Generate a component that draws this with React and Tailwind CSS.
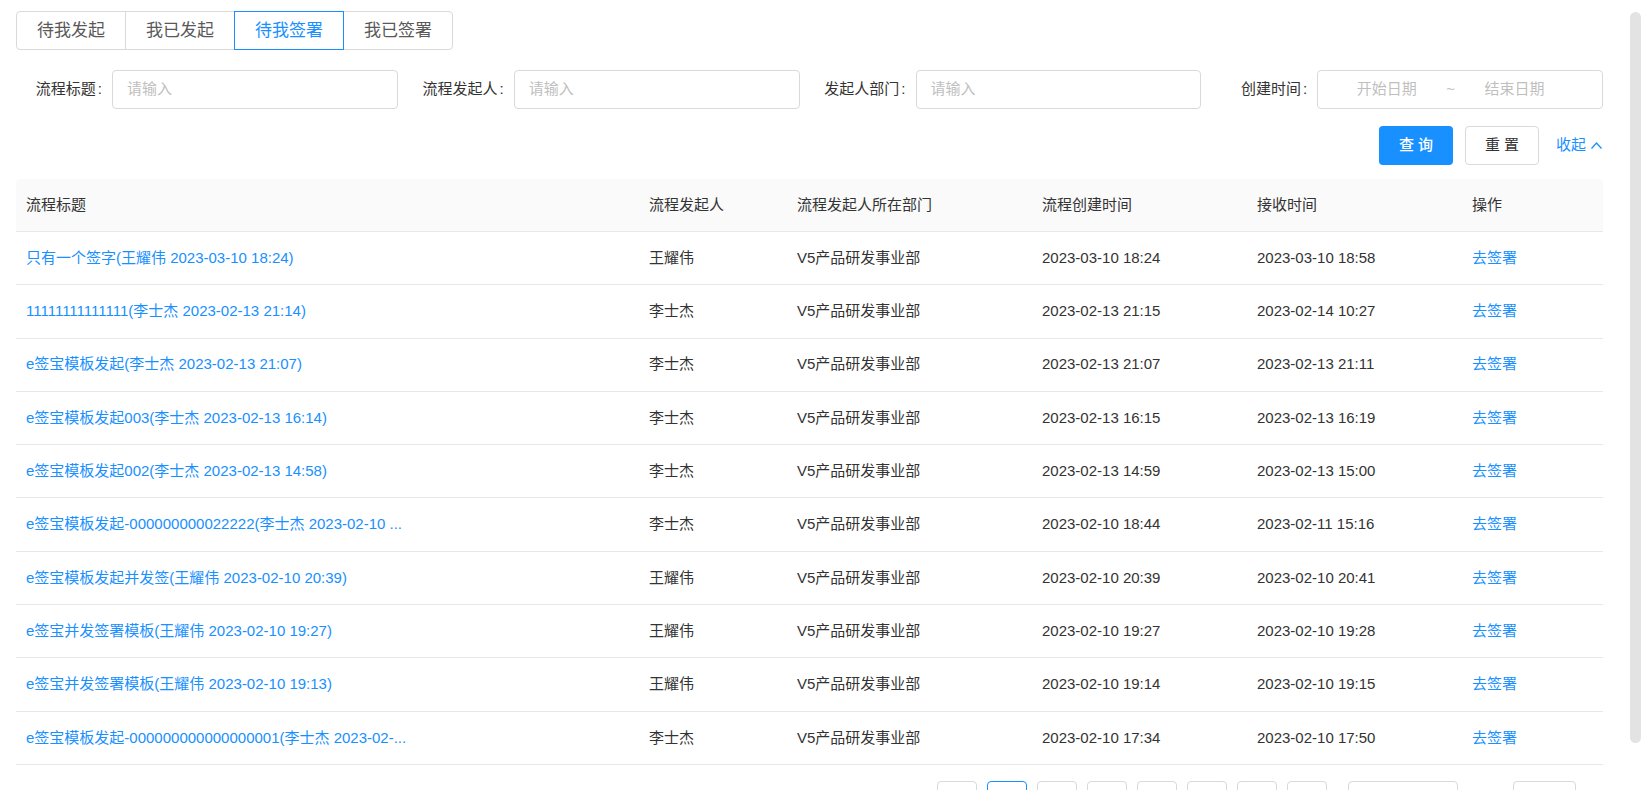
import React from 'react';

// --- DATA ---
const TABS = ['待我发起', '我已发起', '待我签署', '我已签署'];

const ROWS = [
  { title: '只有一个签字(王耀伟 2023-03-10 18:24)', user: '王耀伟', created: '2023-03-10 18:24', received: '2023-03-10 18:58' },
  { title: '11111111111111(李士杰 2023-02-13 21:14)', user: '李士杰', created: '2023-02-13 21:15', received: '2023-02-14 10:27' },
  { title: 'e签宝模板发起(李士杰 2023-02-13 21:07)', user: '李士杰', created: '2023-02-13 21:07', received: '2023-02-13 21:11' },
  { title: 'e签宝模板发起003(李士杰 2023-02-13 16:14)', user: '李士杰', created: '2023-02-13 16:15', received: '2023-02-13 16:19' },
  { title: 'e签宝模板发起002(李士杰 2023-02-13 14:58)', user: '李士杰', created: '2023-02-13 14:59', received: '2023-02-13 15:00' },
  { title: 'e签宝模板发起-000000000022222(李士杰 2023-02-10 ...', user: '李士杰', created: '2023-02-10 18:44', received: '2023-02-11 15:16' },
  { title: 'e签宝模板发起并发签(王耀伟 2023-02-10 20:39)', user: '王耀伟', created: '2023-02-10 20:39', received: '2023-02-10 20:41' },
  { title: 'e签宝并发签署模板(王耀伟 2023-02-10 19:27)', user: '王耀伟', created: '2023-02-10 19:27', received: '2023-02-10 19:28' },
  { title: 'e签宝并发签署模板(王耀伟 2023-02-10 19:13)', user: '王耀伟', created: '2023-02-10 19:14', received: '2023-02-10 19:15' },
  { title: 'e签宝模板发起-000000000000000001(李士杰 2023-02-...', user: '李士杰', created: '2023-02-10 17:34', received: '2023-02-10 17:50' },
];

const COLS = 'grid grid-cols-[623px_148px_245px_215px_215px_141px]';

// --- PARTS ---
const Field = ({ label, children }) => (
  <div className="flex items-center">
    <div className="w-[96px] shrink-0 text-right pr-[10px] text-[15px] text-[#333]">
      {label}<span className="ml-[2px]">:</span>
    </div>
    {children}
  </div>
);

const TextInput = () => (
  <div className="flex-1 h-[39px] border border-[#d9d9d9] rounded-[4px] flex items-center pl-[14px] text-[15px] text-[#bfbfbf]">
    请输入
  </div>
);

const RangeInput = () => (
  <div className="flex-1 h-[39px] border border-[#d9d9d9] rounded-[4px] flex items-center pl-[11px] pr-[30px] text-[15px] text-[#bfbfbf]">
    <span className="flex-1 text-center">开始日期</span>
    <span className="px-[2px] text-[#bfbfbf]">~</span>
    <span className="flex-1 text-center">结束日期</span>
  </div>
);

const PageBox = ({ children, active }) => (
  <div className={`w-[40px] h-[40px] rounded-[4px] border flex items-center justify-center text-[15px] ${active ? 'border-[#1890ff] text-[#1890ff]' : 'border-[#d9d9d9] text-[#333]'}`}>
    {children}
  </div>
);

export default function App() {
  const [activeTab, setActiveTab] = React.useState(2);

  return (
    <div className="h-screen flex overflow-hidden bg-white [font-family:'Liberation_Sans','Noto_Sans_CJK_SC',sans-serif]">
      <div className="flex-1 min-w-0 overflow-hidden pl-[16px] pr-[27px] pt-[11px] pb-[9px]">
        {/* tabs */}
        <div className="flex">
          {TABS.map((t, i) => (
            <button
              key={t}
              onClick={() => setActiveTab(i)}
              className={`w-[110px] h-[39px] flex items-center justify-center text-[17px] border -ml-px first:ml-0 first:rounded-l-[4px] last:rounded-r-[4px] ${activeTab === i ? 'relative z-10 border-[#1890ff] text-[#1890ff]' : 'border-[#d9d9d9] text-[#595959]'}`}
            >
              {t}
            </button>
          ))}
        </div>

        {/* filters */}
        <div className="grid grid-cols-4 gap-x-[20px] mt-[20px]">
          <Field label="流程标题"><TextInput /></Field>
          <Field label="流程发起人"><TextInput /></Field>
          <Field label="发起人部门"><TextInput /></Field>
          <Field label="创建时间"><RangeInput /></Field>
        </div>

        <div className="flex items-center justify-end mt-[17px]">
          <button className="w-[74px] h-[39px] rounded-[4px] bg-[#1890ff] text-white text-[15px] font-medium">查 询</button>
          <button className="w-[74px] h-[39px] rounded-[4px] border border-[#d9d9d9] bg-white text-[#333] text-[15px] ml-[12px]">重 置</button>
          <button className="ml-[17px] flex items-center text-[15px] text-[#1890ff]">
            收起
            <svg width="13" height="9" viewBox="0 0 13 9" className="ml-[4px]">
              <polyline points="1.5,7.5 6.5,2 11.5,7.5" fill="none" stroke="#1890ff" strokeWidth="1.3" />
            </svg>
          </button>
        </div>

        {/* table */}
        <div className="mt-[14px] text-[15px]">
          <div className={`${COLS} h-[53px] bg-[#fafafa] rounded-t-[4px] border-b border-[#e8e8e8] text-[#333]`}>
            {['流程标题', '流程发起人', '流程发起人所在部门', '流程创建时间', '接收时间', '操作'].map(h => (
              <div key={h} className="pl-[10px] flex items-center">{h}</div>
            ))}
          </div>
          {ROWS.map((r, i) => (
            <div key={i} className={`${COLS} h-[53.3px] border-b border-[#e8e8e8] text-[#333]`}>
              <div className="pl-[10px] flex items-center text-[#1890ff] whitespace-nowrap overflow-hidden">{r.title}</div>
              <div className="pl-[10px] flex items-center">{r.user}</div>
              <div className="pl-[10px] flex items-center">V5产品研发事业部</div>
              <div className="pl-[10px] flex items-center">{r.created}</div>
              <div className="pl-[10px] flex items-center">{r.received}</div>
              <div className="pl-[10px] flex items-center text-[#1890ff]">去签署</div>
            </div>
          ))}
        </div>

        {/* pagination */}
        <div className="flex items-center justify-end mt-[16px] pr-[4px]">
          <div className="flex gap-[10px]">
            <PageBox>‹</PageBox>
            <PageBox active>1</PageBox>
            <PageBox>2</PageBox>
            <PageBox>3</PageBox>
            <PageBox>4</PageBox>
            <PageBox>5</PageBox>
            <PageBox>6</PageBox>
            <PageBox>›</PageBox>
          </div>
          <div className="ml-[21px] w-[110px] h-[40px] border border-[#d9d9d9] rounded-[4px] flex items-center pl-[11px] text-[15px] text-[#333]">10 条/页</div>
          <div className="ml-[14px] text-[15px] text-[#333]">跳至</div>
          <div className="ml-[11px] w-[63px] h-[40px] border border-[#d9d9d9] rounded-[4px]"></div>
          <div className="ml-[8px] text-[15px] text-[#333]">页</div>
        </div>
      </div>

      {/* page scrollbar */}
      <div className="w-[11px] shrink-0 pt-[12px]">
        <div className="h-[731px] rounded-[6px] bg-[#e3e3e3]"></div>
      </div>
    </div>
  );
}
